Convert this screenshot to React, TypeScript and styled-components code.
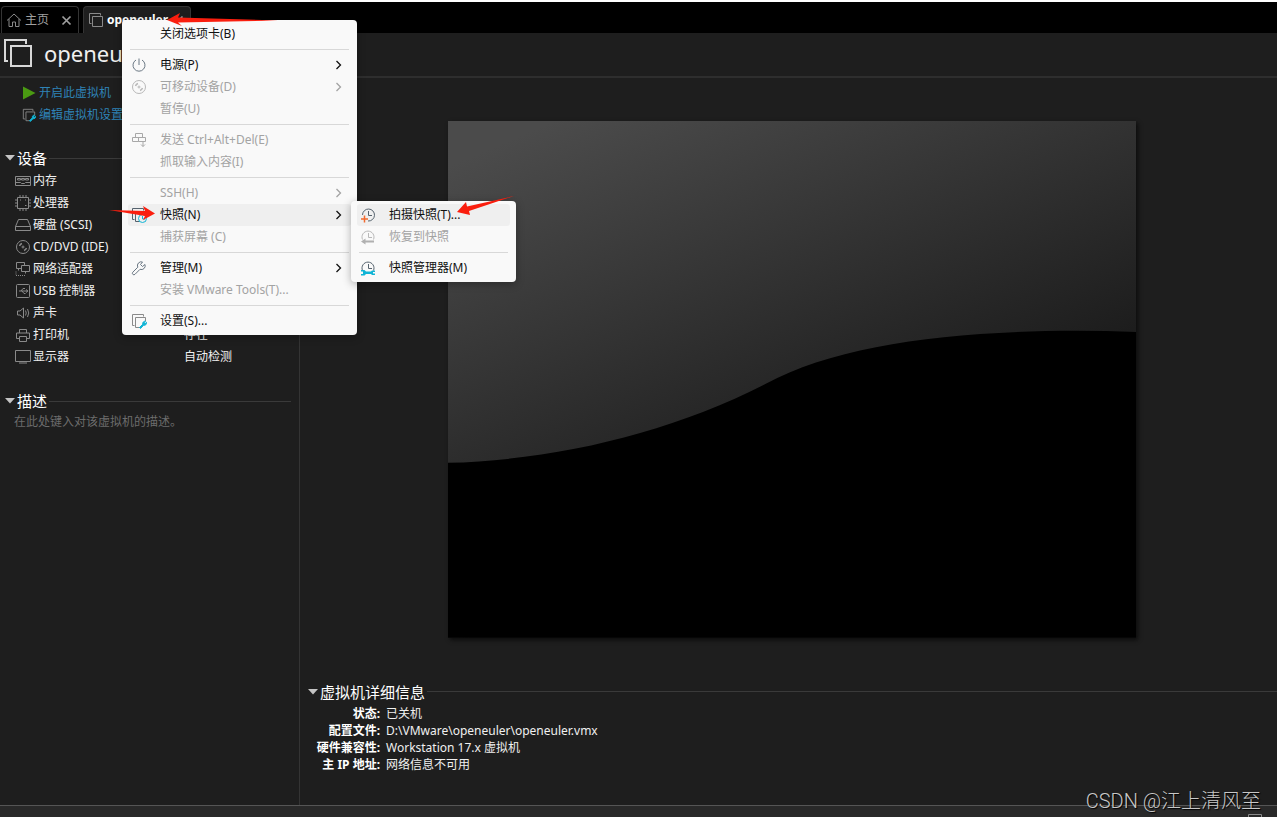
import React from 'react';
import styled, { createGlobalStyle } from 'styled-components';

const sans = '"Noto Sans", "Noto Sans CJK SC", sans-serif';

const Global = createGlobalStyle`
  * { box-sizing: border-box; }
  body { margin: 0; background: #fff; color: #f0f0f0; font: 12px/22px ${sans}; }
  button, textarea { font: inherit; color: inherit; border: 0; background: none; padding: 0; margin: 0; }
  h1, h2 { margin: 0; font-weight: 400; }
  svg { display: block; flex: none; }
`;

const Page = styled.div`
  position: relative;
  min-height: 100vh;
  display: flex;
  flex-direction: column;
  padding: 2px 0 3px;
`;

const TabBar = styled.nav`
  display: flex;
  gap: 4px;
  height: 31px;
  padding: 4px 1px 0;
  background: #000;
`;

const Tab = styled.div<{ $active?: boolean; $width: number }>`
  display: flex;
  align-items: center;
  width: ${p => p.$width}px;
  padding: 0 6px 0 4px;
  border: 1px solid #343434;
  border-bottom: 0;
  border-radius: 4px 4px 0 0;
  background: ${p => (p.$active ? '#1e1e1e' : '#000')};
  color: ${p => (p.$active ? '#fff' : '#a0a0a0')};
  font-weight: ${p => (p.$active ? 700 : 400)};
`;

const TabLabel = styled.button`
  flex: 1;
  display: flex;
  align-items: center;
  gap: 3px;
`;

const Title = styled.header`
  display: flex;
  align-items: center;
  gap: 10px;
  height: 45px;
  padding: 0 4px 4px;
  background: #1e1e1e;
  border-bottom: 2px solid #2e2e2e;
  h1 { font-size: 22px; line-height: 30px; }
`;

const Body = styled.div`
  flex: 1;
  display: flex;
  background: #1e1e1e;
`;

const Sidebar = styled.aside`
  flex: none;
  width: 300px;
  padding: 4px 8px 0 0;
  border-right: 1px solid #343434;
`;

const Main = styled.main`
  flex: 1;
  min-width: 0;
  padding: 43px 0 0 3px;
`;

const ActionLink = styled.a`
  display: flex;
  align-items: center;
  gap: 3px;
  height: 22px;
  padding-left: 22px;
  color: #2f83b7;
  text-decoration: none;
`;

const Section = styled.section<{ $gap: number }>`
  margin-top: ${p => p.$gap}px;
`;

const SectionTitle = styled.h2`
  display: flex;
  align-items: center;
  gap: 2px;
  height: 22px;
  font-size: 15px;
  color: #fff;
  &::after { content: ''; flex: 1; height: 1px; background: #3a3a3a; }
`;

const DeviceTable = styled.table`
  width: 100%;
  margin-top: 1px;
  border-collapse: collapse;
  th, td { height: 22px; padding: 0; font-weight: 400; text-align: left; }
  th { width: 184px; padding-left: 15px; }
`;

const DeviceName = styled.span`
  display: flex;
  align-items: center;
  gap: 2px;
`;

const Description = styled.textarea`
  display: block;
  width: 100%;
  height: 40px;
  padding: 1px 14px;
  line-height: 18px;
  resize: none;
  outline: 0;
  &::placeholder { color: #6c6c6c; opacity: 1; }
`;

const Stage = styled.div`
  padding-left: 4px;
`;

const Preview = styled.div`
  width: 71%;
  margin: 0 auto;
  box-shadow: 2px 2px 4px #0c0c0c;
  svg { width: 100%; height: auto; }
`;

const DetailTable = styled.table`
  margin-top: 2px;
  border-collapse: collapse;
  line-height: 17px;
  th, td { padding: 0; }
  th { width: 77px; text-align: right; color: #fff; white-space: nowrap; }
  td { padding-left: 6px; }
`;

const StatusBar = styled.footer`
  display: flex;
  justify-content: flex-end;
  height: 12px;
  padding: 4px 14px 0;
  overflow: hidden;
  background: #292929;
  border-top: 1px solid #555;
`;

const Menu = styled.div<{ $x: number; $y: number; $width: number }>`
  position: absolute;
  left: ${p => p.$x}px;
  top: ${p => p.$y}px;
  width: ${p => p.$width}px;
  padding: 3px 6px;
  background: #f9f9f9;
  border-radius: 4px;
  box-shadow: 0 2px 8px rgba(0, 0, 0, 0.3);
  color: #111;
`;

const MenuItem = styled.button<{ $active?: boolean }>`
  display: flex;
  align-items: center;
  width: 100%;
  height: 22px;
  padding: 0 9px 0 3px;
  border-radius: 3px;
  text-align: left;
  background: ${p => (p.$active ? '#efefef' : 'transparent')};
  &:disabled { color: #a3a3a3; }
`;

const IconSlot = styled.span`
  width: 29px;
`;

const MenuText = styled.span`
  flex: 1;
`;

const Divider = styled.hr`
  height: 1px;
  margin: 4px 2px;
  border: 0;
  background: #d8d8d8;
`;

const Watermark = styled.div`
  position: absolute;
  right: 16px;
  bottom: 5px;
  font: 300 20px/28px Roboto, "Noto Sans CJK SC", sans-serif;
  color: #c8c8c8;
  text-shadow: 1px 1px 1px #000;
`;

const Annotations = styled.svg`
  position: absolute;
  left: 0;
  top: 0;
  pointer-events: none;
`;

type IconProps = { children: React.ReactNode; size?: number; color?: string; sw?: number };

const Icon = ({ children, size = 16, color = '#8a8a8a', sw = 1 }: IconProps) => (
  <svg width={size} height={size} viewBox="0 0 16 16" fill="none" stroke={color} strokeWidth={sw} aria-hidden="true">
    {children}
  </svg>
);

const windows = <path d="M3.500 11.500h-2v-10h11v2M4.500 4.500h10v10h-10z" />;
const windowsOpen = <path d="M3.500 12.500h-2v-11h11v2M9 14.500H4.500v-10h10V8" />;
const wrench = (
  <path d="M8.500 14.500l3.300-3.300a2.400 2.400 0 0 1 2.700-3l-1.200 1.400.9.900 1.400-1.200a2.400 2.400 0 0 1-3 2.900L9.600 15.500z" fill="#11b5d6" stroke="#11b5d6" />
);
const disc = (
  <>
    <circle cx="8" cy="8" r="6.500" />
    <circle cx="8" cy="8" r="1" />
    <path d="M4.500 7a4 4 0 0 1 2.500-2.500M11.500 9a4 4 0 0 1-2.500 2.500" strokeWidth="1.500" />
  </>
);
const clock = <path d="M2.500 10.500A6 6 0 1 1 13.500 10.500M8.500 4v4.500H12" />;

const Close = () => (
  <svg width="11" height="11" viewBox="0 0 11 11" stroke="#a0a0a0" strokeWidth="1.700" aria-hidden="true">
    <path d="M1.500 1.500l8 8M9.500 1.500l-8 8" />
  </svg>
);

const Chevron = () => (
  <svg width="7" height="10" viewBox="0 0 7 10" fill="none" stroke="currentColor" strokeWidth="1.300" aria-hidden="true">
    <path d="M1.500 1l4 4-4 4" />
  </svg>
);

const Triangle = () => (
  <svg width="15" height="6" viewBox="0 0 15 6" fill="#c4c4c4" aria-hidden="true">
    <path d="M5 0h10l-5 5.500z" />
  </svg>
);

const devices: { name: string; value?: string; icon: React.ReactNode }[] = [
  { name: '内存', icon: <path d="M.5 3.500h15v9H.5zM.5 9.500h5l1 1h3l1-1h5M2.500 5.500h3v1.500h-3zM6.500 5.500h3v1.500h-3zM10.500 5.500h3v1.500h-3z" /> },
  { name: '处理器', icon: <path d="M2.500 2.500h11v11h-11zM5 0v2.500M8 0v2.500M11 0v2.500M5 13.500V16M8 13.500V16M11 13.500V16M0 5h2.500M0 8h2.500M0 11h2.500M13.500 5H16M13.500 8H16M13.500 11H16M5 5h1M10 10.500h1.500M10 5h1" /> },
  { name: '硬盘 (SCSI)', icon: <path d="M.5 9.500l3-7h9l3 7v4H.5zM.5 9.500h15" /> },
  { name: 'CD/DVD (IDE)', icon: disc },
  { name: '网络适配器', icon: <><path d="M7 7.500H1.500v-6h8v3M6.500 4.500h8v6h-8zM10.500 10.500v2M3.500 7.500v2" /><path d="M1 10.500v4M1 14.500h9" strokeDasharray="1 1" /></> },
  { name: 'USB 控制器', icon: <><rect x="1.500" y="1.500" width="13" height="13" rx="1" /><path d="M4 8h8M6 8l2-2.500h2M7 8l2 2.500h1.500M11 6.500l2 1.500-2 1.500" /></> },
  { name: '声卡', icon: <path d="M2.500 6v4H5l3.500 3V3L5 6zM10.500 5.500q1.500 2.500 0 5M12.500 4q2.500 4 0 8" /> },
  { name: '打印机', value: '存在', icon: <path d="M4.500 6V2.500h7V6M4 11.500H1.500V6h13v5.500H12M4.500 9.500h7v5h-7z" /> },
  { name: '显示器', value: '自动检测', icon: <path d="M.5 1.500h15v11H.5zM4 14h8" /> },
];

const details = [
  ['状态:', '已关机'],
  ['配置文件:', 'D:\\VMware\\openeuler\\openeuler.vmx'],
  ['硬件兼容性:', 'Workstation 17.x 虚拟机'],
  ['主 IP 地址:', '网络信息不可用'],
];

type Entry = { text: string; icon?: React.ReactNode; off?: boolean; sub?: boolean; active?: boolean } | null;

const menuEntries: Entry[] = [
  { text: '关闭选项卡(B)' },
  null,
  { text: '电源(P)', sub: true, icon: <Icon color="#6b7884"><path d="M5 3a6 6 0 1 0 6 0M8 1.500V8" /></Icon> },
  { text: '可移动设备(D)', sub: true, off: true, icon: <Icon color="#b8b8b8">{disc}</Icon> },
  { text: '暂停(U)', off: true },
  null,
  { text: '发送 Ctrl+Alt+Del(E)', off: true, icon: <Icon color="#a8a8a8"><path d="M4.500 1.500h7v4h-7zM1.500 5.500h6v4h-6zM7.500 5.500h7v4h-7zM12 9v5.500M10 12.500l2 2 2-2" /></Icon> },
  { text: '抓取输入内容(I)', off: true },
  null,
  { text: 'SSH(H)', sub: true, off: true },
  { text: '快照(N)', sub: true, active: true, icon: <Icon color="#56636e">{windowsOpen}<circle cx="11.500" cy="11.500" r="4" stroke="#11b5d6" fill="#efefef" /><path d="M11.500 9v3H14" stroke="#11b5d6" /></Icon> },
  { text: '捕获屏幕 (C)', off: true },
  null,
  { text: '管理(M)', sub: true, icon: <Icon color="#6b7884"><path d="M1.800 12.200l5-5A3.800 3.800 0 0 1 11.500 2l-2 2.500 2 2L14 4.500A3.800 3.800 0 0 1 9 9.300l-5 5a1.500 1.500 0 0 1-2.200-2.100z" /></Icon> },
  { text: '安装 VMware Tools(T)...', off: true },
  null,
  { text: '设置(S)...', icon: <Icon>{windowsOpen}{wrench}</Icon> },
];

const snapshotEntries: Entry[] = [
  { text: '拍摄快照(T)...', active: true, icon: <Icon color="#56636e"><path d="M2.500 8A6 6 0 1 1 8 14M8.500 4v4.500H12" /><path d="M4.500 8.500v7M1 12h7" stroke="#f26a2e" strokeWidth="1.500" /></Icon> },
  { text: '恢复到快照', off: true, icon: <Icon color="#b8b8b8">{clock}<path d="M5.500 9.500v6L1 12.500zM5 11.500h9v2H5z" fill="#b0b0b0" stroke="none" /></Icon> },
  null,
  { text: '快照管理器(M)', icon: <Icon color="#56636e">{clock}<path d="M1 10h3.500l1.500 1.500h5l1-1h3V12h-2v1.500h2V15h-3l-1-1H6l-1.500 1.500H1V14h2v-2.500H1z" fill="#11b5d6" stroke="none" /></Icon> },
];

const MenuList = ({ entries }: { entries: Entry[] }) => (
  <>
    {entries.map((e, i) =>
      e ? (
        <MenuItem key={i} role="menuitem" disabled={e.off} $active={e.active}>
          <IconSlot>{e.icon}</IconSlot>
          <MenuText>{e.text}</MenuText>
          {e.sub && <Chevron />}
        </MenuItem>
      ) : (
        <Divider key={i} />
      )
    )}
  </>
);

export default function App() {
  return (
    <Page>
      <Global />
      <TabBar>
        <Tab $width={78}>
          <TabLabel>
            <Icon><path d="M1 8.500L8 2l7 6.500M3 7v7.500h3.500V10h3v4.500H13V7" /></Icon>
            主页
          </TabLabel>
          <button aria-label="关闭主页"><Close /></button>
        </Tab>
        <Tab $width={108} $active>
          <TabLabel>
            <Icon>{windows}</Icon>
            openeuler
          </TabLabel>
          <button aria-label="关闭 openeuler"><Close /></button>
        </Tab>
      </TabBar>
      <Title>
        <svg width="30" height="30" viewBox="0 0 30 30" fill="none" stroke="#d8d8d8" strokeWidth="2" aria-hidden="true">
          <path d="M4 23H1V2h21v4M7 8h20v20H7z" />
        </svg>
        <h1>openeuler</h1>
      </Title>
      <Body>
        <Sidebar>
          <ActionLink href="#power">
            <svg width="14" height="14" viewBox="0 0 14 14" fill="#4a9a12" aria-hidden="true"><path d="M1 0.500l12.500 6.500L1 13.500z" /></svg>
            开启此虚拟机
          </ActionLink>
          <ActionLink href="#settings">
            <Icon size={14}>{windowsOpen}{wrench}</Icon>
            编辑虚拟机设置
          </ActionLink>
          <Section $gap={21}>
            <SectionTitle><Triangle />设备</SectionTitle>
            <DeviceTable>
              <tbody>
                {devices.map(d => (
                  <tr key={d.name}>
                    <th scope="row"><DeviceName><Icon>{d.icon}</Icon>{d.name}</DeviceName></th>
                    <td>{d.value}</td>
                  </tr>
                ))}
              </tbody>
            </DeviceTable>
          </Section>
          <Section $gap={22}>
            <SectionTitle><Triangle />描述</SectionTitle>
            <Description aria-label="描述" placeholder="在此处键入对该虚拟机的描述。" />
          </Section>
        </Sidebar>
        <Main>
          <Stage>
            <Preview>
              <svg viewBox="0 0 689 517" role="img" aria-label="虚拟机屏幕">
                <defs>
                  <linearGradient id="shade" gradientUnits="userSpaceOnUse" x1="60" y1="20" x2="235" y2="430">
                    <stop offset="0" stopColor="#4b4b4b" />
                    <stop offset="1" stopColor="#1a1a1a" />
                  </linearGradient>
                </defs>
                <rect width="689" height="517" fill="url(#shade)" />
                <path d="M0 342C110 339 222 312 318 263C400 218 540 206 689 211V517H0z" fill="#000" />
              </svg>
            </Preview>
          </Stage>
          <Section $gap={43}>
            <SectionTitle><Triangle />虚拟机详细信息</SectionTitle>
            <DetailTable>
              <tbody>
                {details.map(([k, v]) => (
                  <tr key={k}><th scope="row">{k}</th><td>{v}</td></tr>
                ))}
              </tbody>
            </DetailTable>
          </Section>
        </Main>
      </Body>
      <StatusBar><Icon><path d="M1.500 4.500h13v11h-13z" /></Icon></StatusBar>
      <Menu role="menu" $x={122} $y={20} $width={235}><MenuList entries={menuEntries} /></Menu>
      <Menu role="menu" $x={351} $y={201} $width={165}><MenuList entries={snapshotEntries} /></Menu>
      <Watermark>CSDN @江上清风至</Watermark>
      <Annotations width="520" height="230" fill="#fa1e0e" aria-hidden="true">
        <path d="M167 20L180 13L178 17.500L278 20.500L178 22.500L182 26z" />
        <path d="M109 210L145 211L143 206L155 213.500L143 220L145 216z" />
        <path d="M457 212L466 202L467 206.500L514 196L469 211L470 215z" />
      </Annotations>
    </Page>
  );
}
